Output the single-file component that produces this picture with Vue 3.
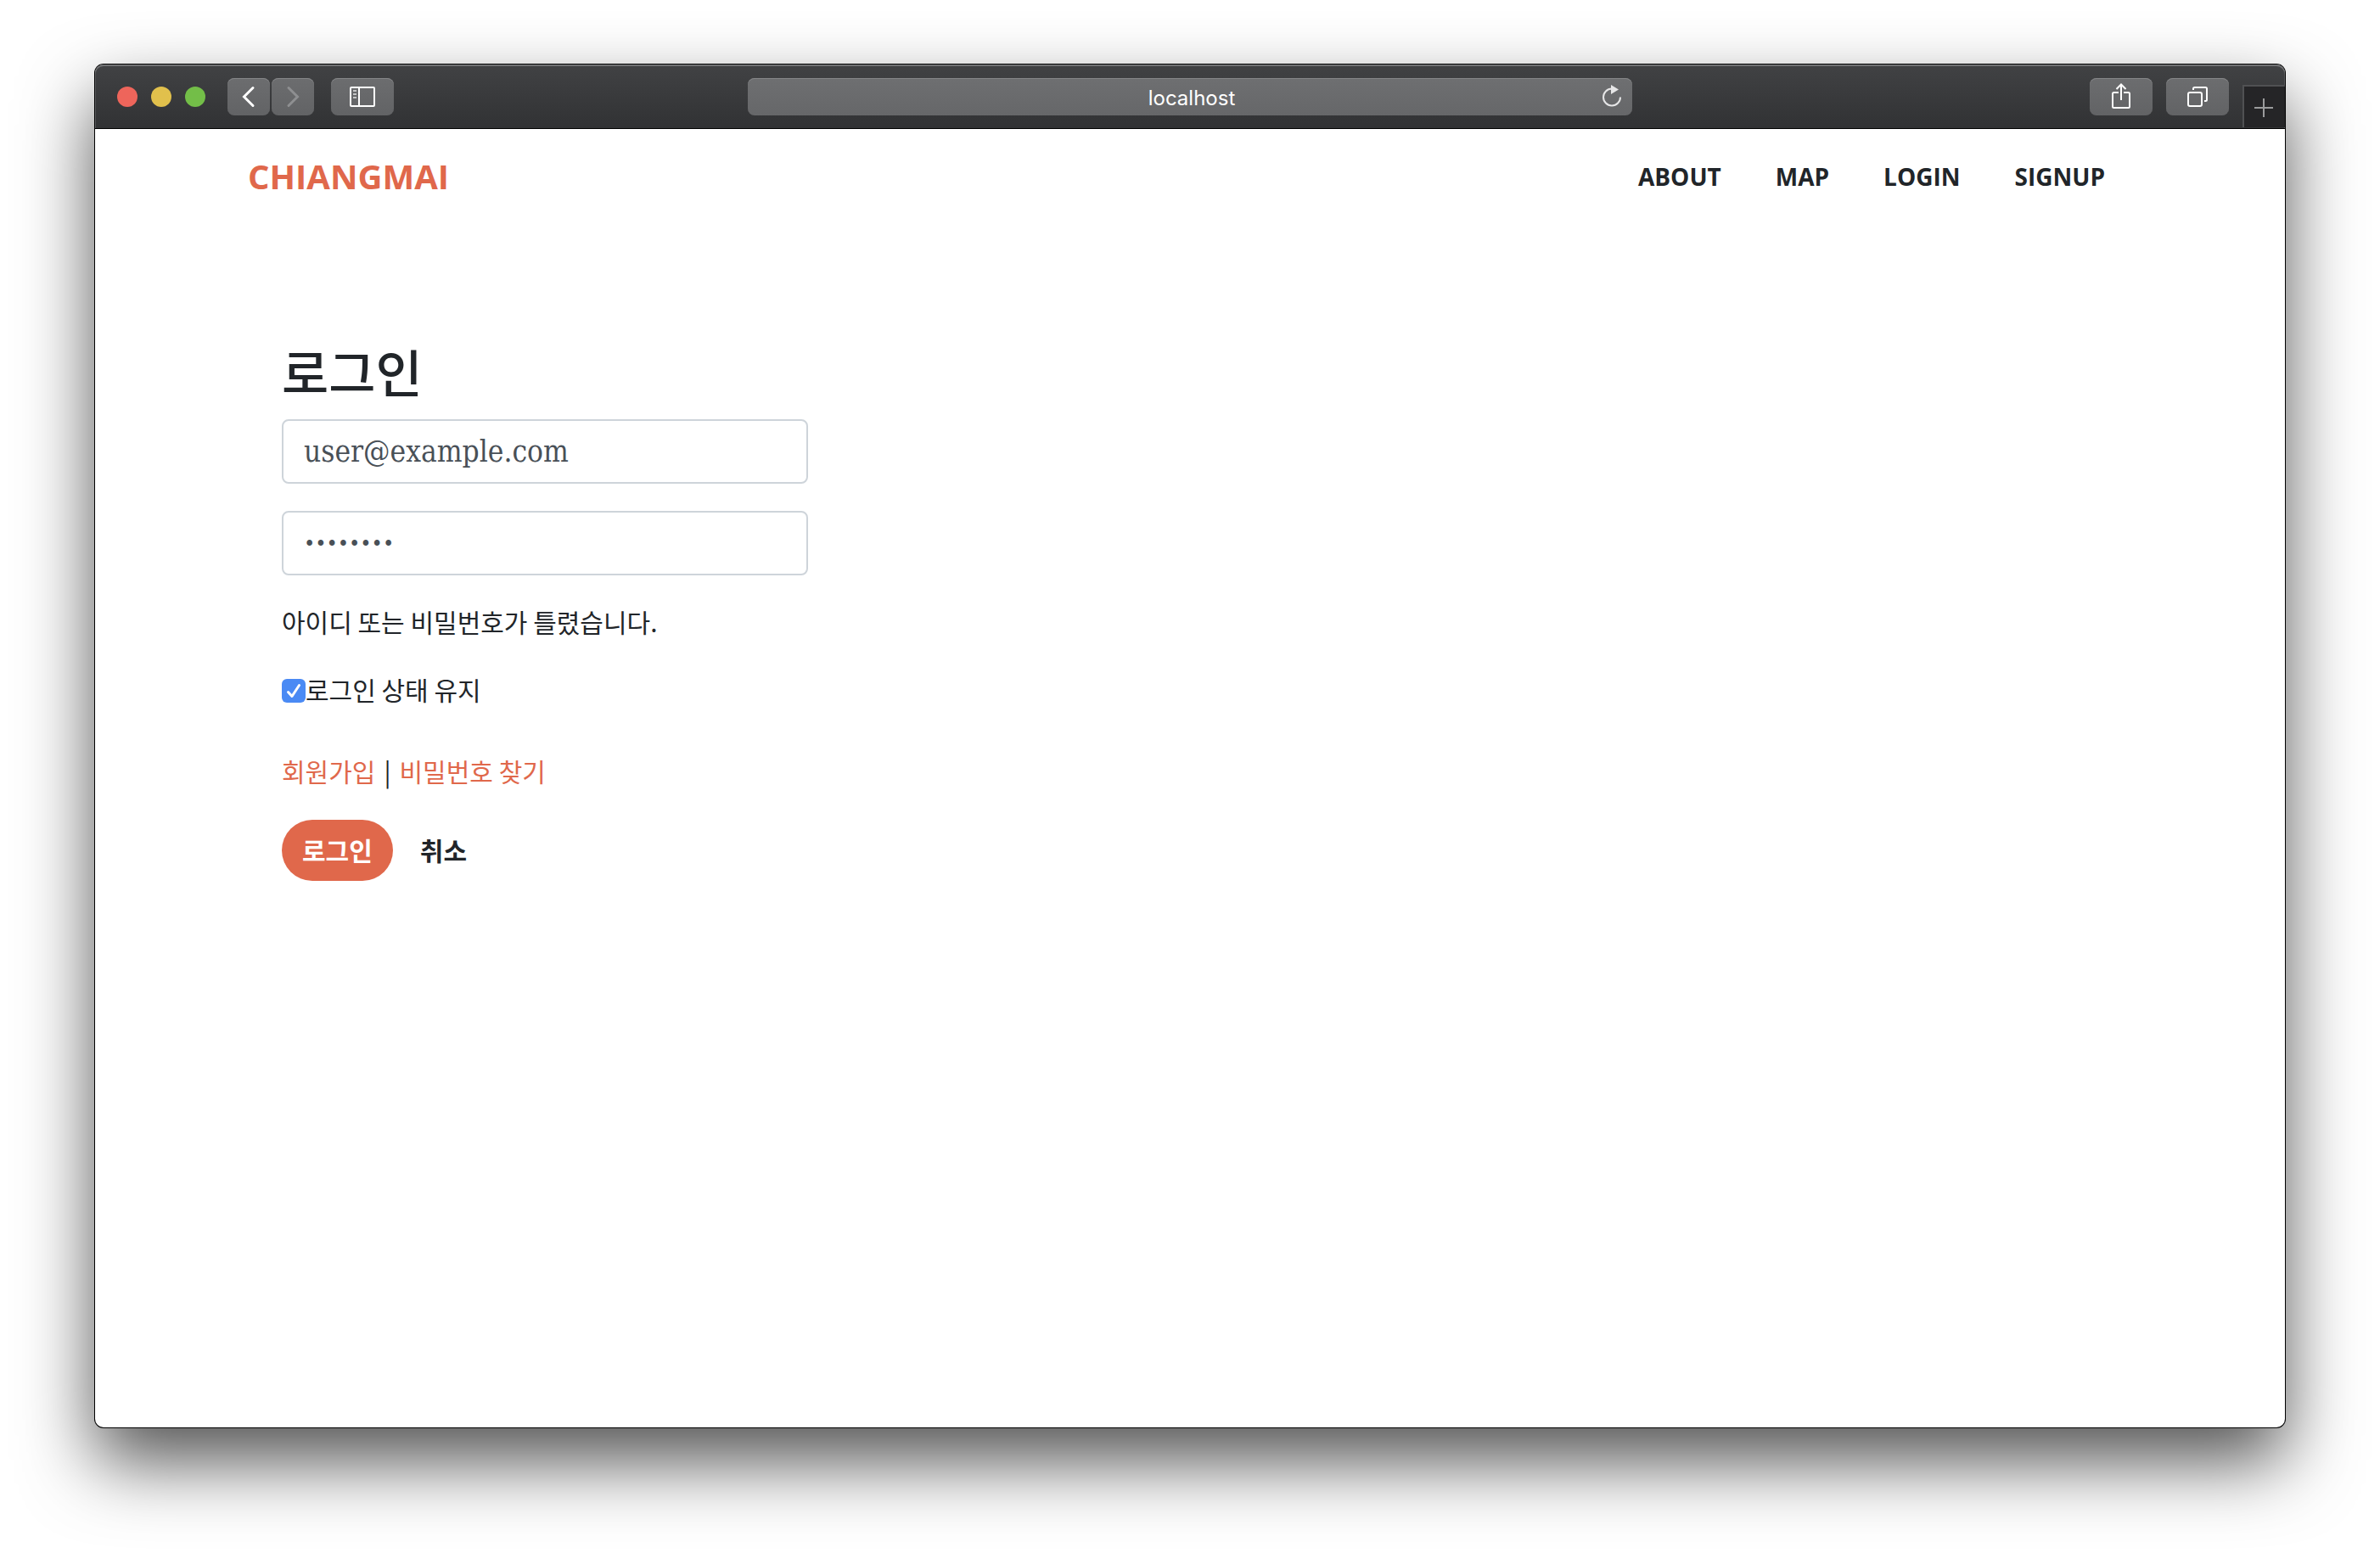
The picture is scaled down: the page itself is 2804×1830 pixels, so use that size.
<script setup>
import { ref } from 'vue'

const address = ref('localhost')
const email = ref('user@example.com')
const password = ref('password')
const remember = ref(true)
const links = ['ABOUT', 'MAP', 'LOGIN', 'SIGNUP']
</script>

<template>
  <div class="desktop">
    <div class="window">
      <div class="toolbar">
        <div class="side">
          <div class="lights">
            <button type="button" class="light red" aria-label="Close"></button>
            <button type="button" class="light yellow" aria-label="Minimize"></button>
            <button type="button" class="light green" aria-label="Zoom"></button>
          </div>
          <div class="history">
            <button type="button" class="tool arrow" aria-label="Back">
              <svg width="50" height="44" viewBox="0 0 50 44" fill="none" stroke="#fff" stroke-width="3" stroke-linecap="round" stroke-linejoin="miter"><path d="M30 11.500 19.500 22 30 32.500" /></svg>
            </button>
            <button type="button" class="tool arrow" aria-label="Forward">
              <svg width="50" height="44" viewBox="0 0 50 44" fill="none" stroke="#8e8f91" stroke-width="3" stroke-linecap="round" stroke-linejoin="miter"><path d="M20 11.500 30.500 22 20 32.500" /></svg>
            </button>
          </div>
          <button type="button" class="tool" aria-label="Sidebar">
            <svg width="74" height="44" viewBox="0 0 74 44" fill="none" stroke="#fff" stroke-width="2"><rect x="23" y="11" width="28" height="22" rx="1" /><path d="M33 11V33" /><path d="M26 15H30M26 19H30M26 23H30" stroke="#c4c5c6" /></svg>
          </button>
        </div>
        <div class="address">
          <input v-model="address" type="text" aria-label="Address" />
          <button type="button" class="reload" aria-label="Reload">
            <svg width="48" height="44" viewBox="0 0 48 44"><path d="M34 22.500A10 10 0 1 1 24 12.500" fill="none" stroke="#e6e6e7" stroke-width="2" /><path d="M23 8 32 13.500 23 19Z" fill="#e6e6e7" /></svg>
          </button>
        </div>
        <div class="side right">
          <button type="button" class="tool" aria-label="Share">
            <svg width="74" height="44" viewBox="0 0 74 44" fill="none" stroke="#fff" stroke-width="2"><path d="M34 17H28.500Q27 17 27 18.500V33.500Q27 35 28.500 35H45.500Q47 35 47 33.500V18.500Q47 17 45.500 17H40M37 26V8M31.500 13 37 7.500 42.500 13" /></svg>
          </button>
          <button type="button" class="tool" aria-label="Tabs">
            <svg width="74" height="44" viewBox="0 0 74 44" fill="none" stroke="#fff" stroke-width="2"><rect x="26" y="17" width="16" height="16" rx="2" /><path d="M32 14V12.500Q32 11 33.500 11H46.500Q48 11 48 12.500V25.500Q48 27 46.500 27H45" /></svg>
          </button>
          <button type="button" class="new-tab" aria-label="New tab">
            <svg width="48" height="48" viewBox="0 0 48 48" stroke="#9b9c9d" stroke-width="2"><path d="M12 25H34M23 14V36" /></svg>
          </button>
        </div>
      </div>

      <div class="page">
        <header class="navbar">
          <a href="#" class="brand">CHIANGMAI</a>
          <nav>
            <a v-for="link in links" :key="link" href="#">{{ link }}</a>
          </nav>
        </header>
        <form class="login" @submit.prevent>
          <h1>로그인</h1>
          <input v-model="email" class="field" type="email" aria-label="이메일" />
          <input v-model="password" class="field" type="password" aria-label="비밀번호" />
          <p class="error">아이디 또는 비밀번호가 틀렸습니다.</p>
          <label class="remember">
            <input v-model="remember" type="checkbox" />
            <span>로그인 상태 유지</span>
          </label>
          <p class="help"><a href="#">회원가입</a><span>|</span><a href="#">비밀번호 찾기</a></p>
          <div class="actions">
            <button type="submit" class="submit">로그인</button>
            <button type="button" class="cancel">취소</button>
          </div>
        </form>
      </div>
    </div>
  </div>
</template>

<style>
body {
  background: #fff;
}
</style>

<style scoped>
* {
  box-sizing: border-box;
}
button {
  border: 0;
  padding: 0;
  background: none;
  font: inherit;
  color: inherit;
}
svg {
  display: block;
}
.desktop {
  display: flex;
  min-height: 100vh;
  padding: 76px 112px 148px;
  overflow: hidden;
  font-family: "Open Sans", "Noto Sans CJK KR", sans-serif;
  color: #212529;
}
.window {
  flex: 1;
  display: flex;
  flex-direction: column;
  border-radius: 10px;
  background: #fff;
  box-shadow: 0 0 0 1px #000, 0 40px 86px rgba(0, 0, 0, 0.68);
}
.toolbar {
  display: grid;
  grid-template-columns: 1fr minmax(0, 1042px) 1fr;
  align-items: start;
  height: 76px;
  padding-top: 16px;
  border-bottom: 1px solid #000;
  border-radius: 10px 10px 0 0;
  background: linear-gradient(#414244, #313234);
  box-shadow: inset 0 2px #717274, inset 1px 0 #5a5b5d, inset -1px 0 #5a5b5d;
}
.side {
  display: flex;
  padding-left: 26px;
}
.right {
  justify-content: flex-end;
  gap: 16px;
  padding-left: 0;
}
.lights {
  display: flex;
  align-items: center;
  gap: 16px;
  margin-right: 26px;
}
.light {
  width: 24px;
  height: 24px;
  border-radius: 50%;
}
.red {
  background: #ee655b;
}
.yellow {
  background: #e1c04c;
}
.green {
  background: #73be48;
}
.history {
  display: flex;
  gap: 2px;
  margin-right: 20px;
}
.tool {
  width: 74px;
  height: 44px;
  border-radius: 8px;
  background: linear-gradient(#6c6d6f, #626365);
  box-shadow: inset 0 1px #858688;
}
.arrow {
  width: 50px;
}
.address {
  position: relative;
}
.address input {
  display: block;
  width: 100%;
  height: 44px;
  padding: 2px 46px 0 50px;
  border: 0;
  border-radius: 8px;
  background: linear-gradient(#6e6f71, #666769);
  box-shadow: inset 0 1px #858688;
  color: #fff;
  font: 24px Inter, sans-serif;
  text-align: center;
}
.reload {
  position: absolute;
  top: 0;
  right: 0;
}
.new-tab {
  width: 50px;
  height: 50px;
  margin-top: 8px;
  border-top: 2px solid #505153;
  border-left: 2px solid #505153;
  background: #252527;
}
.page {
  width: 100%;
  max-width: 2220px;
  margin: 0 auto;
}
.navbar {
  display: flex;
  align-items: center;
  justify-content: space-between;
  height: 110px;
}
a {
  color: #e0684b;
  text-decoration: none;
}
.brand {
  font-size: 40px;
  font-weight: 700;
}
nav {
  display: flex;
}
nav a {
  padding: 2px 32px 0;
  color: #212529;
  font-size: 28px;
  font-weight: 700;
}
.login {
  display: flex;
  flex-direction: column;
  max-width: 660px;
  margin-top: 136px;
  padding-left: 40px;
  font-family: "Noto Sans CJK KR", sans-serif;
  font-size: 30px;
  line-height: 48px;
}
h1 {
  margin: 0 0 18px;
  font-size: 60px;
  font-weight: 500;
  line-height: 78px;
}
.field {
  width: 100%;
  height: 76px;
  margin-bottom: 32px;
  padding: 0 24px;
  border: 2px solid #ced4da;
  border-radius: 8px;
  background: #fff;
  color: #495057;
  font: 35px "DejaVu Serif Condensed", "Liberation Serif", serif;
}
.field[type="password"] {
  margin-bottom: 30px;
  font-size: 25px;
}
.error {
  margin: 0 0 32px;
}
.remember {
  display: flex;
  align-items: flex-end;
  margin-bottom: 48px;
}
.remember input {
  appearance: none;
  width: 28px;
  height: 28px;
  margin: 0 0 8px;
  border-radius: 6px;
  background: #4a8af4 url("data:image/svg+xml,%3Csvg xmlns='http://www.w3.org/2000/svg' viewBox='0 0 28 28' fill='none' stroke='white' stroke-width='3' stroke-linecap='round' stroke-linejoin='round'%3E%3Cpath d='M7.500 15.500 12 20.500 20.500 7.500'/%3E%3C/svg%3E");
}
.help {
  display: flex;
  gap: 10px;
  margin: 0 0 34px;
}
.actions {
  display: flex;
  align-items: center;
  gap: 32px;
  font-weight: 700;
}
.actions button {
  height: 72px;
  padding-bottom: 2px;
}
.actions .submit {
  padding: 0 24px 2px;
  border-radius: 36px;
  background: #e0684b;
  color: #fff;
}
</style>
